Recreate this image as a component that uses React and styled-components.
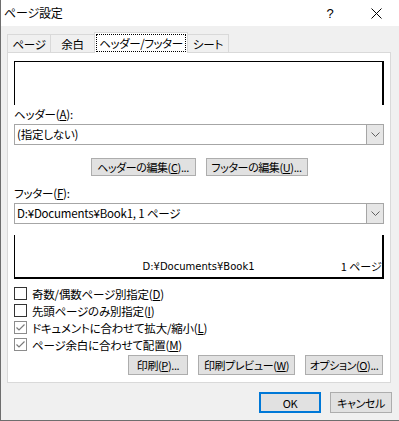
import React from "react";
import styled, { createGlobalStyle } from "styled-components";

const Global = createGlobalStyle`
  * { box-sizing: border-box; }
  html, body { margin: 0; padding: 0; background: #fff; }
  body {
    font-family: "Noto Sans CJK JP", "Noto Sans", sans-serif;
    font-size: 11.5px;
    letter-spacing: -0.2px;
    color: #000;
    font-feature-settings: "palt";
  }
`;

const Window = styled.div`
  width: 399px;
  height: 421px;
  background: #f0f0f0;
  border-left: 1px solid #6e6e6e;
  border-bottom: 1px solid #6e6e6e;
  display: flex;
  flex-direction: column;
`;

const TitleBar = styled.div`
  height: 26px;
  background: #fff;
  display: flex;
  align-items: center;
`;

const TitleText = styled.div`
  flex: 1;
  padding-left: 3px;
  font-size: 12px;
  line-height: 26px;
`;

const CaptionButton = styled.div`
  width: 46px;
  height: 26px;
  display: flex;
  align-items: center;
  justify-content: center;
  font-family: "Liberation Sans", sans-serif;
  font-size: 13px;
`;

const TabStrip = styled.div`
  height: 26px;
  display: flex;
  align-items: flex-end;
  padding-left: 6px;
`;

const Tab = styled.div`
  position: relative;
  z-index: ${(p) => (p.$active ? 1 : 0)};
  width: ${(p) => p.$w}px;
  height: ${(p) => (p.$active ? 21 : 18)}px;
  margin-left: ${(p) => (p.$first ? 0 : -1)}px;
  margin-bottom: ${(p) => (p.$active ? -1 : 0)}px;
  border: 1px solid #d9d9d9;
  border-bottom: none;
  background: ${(p) => (p.$active ? "#fff" : "#f0f0f0")};
  display: flex;
  align-items: center;
  justify-content: center;
  line-height: 16px;
  white-space: nowrap;
  padding-top: ${(p) => (p.$active ? 0 : 1)}px;
`;

const FocusText = styled.span`
  border: 1px dotted #000;
  padding: 0 2px;
  line-height: 16px;
  letter-spacing: -0.4px;
`;

const Panel = styled.div`
  margin-left: 6px;
  width: 384px;
  height: 331px;
  background: #fff;
  border: 1px solid #d9d9d9;
  padding: 8px 6px 0 6px;
  display: flex;
  flex-direction: column;
`;

const HeaderPreview = styled.div`
  height: 44px;
  border-top: 1px solid #000;
  border-left: 1px solid #000;
  border-right: 2px solid #000;
`;

const FooterPreview = styled.div`
  margin-top: 11px;
  height: 44px;
  border-left: 1px solid #000;
  border-bottom: 2px solid #000;
  border-right: 2px solid #000;
  display: grid;
  grid-template-columns: 1fr auto 1fr;
  align-items: end;
  padding-bottom: 4px;
  font-family: "DejaVu Sans", "Noto Sans CJK JP", sans-serif;
  font-size: 10px;
  letter-spacing: 0;
  line-height: 13px;
  font-feature-settings: normal;
`;

const PreviewCenter = styled.span`
  grid-column: 2;
`;

const PreviewRight = styled.span`
  grid-column: 3;
  justify-self: end;
  font-family: "Noto Sans CJK JP", sans-serif;
  font-size: 11px;
`;

const FieldLabel = styled.div`
  height: 19px;
  line-height: 19px;
  margin-top: ${(p) => p.$mt || 0}px;
`;

const Combo = styled.div`
  height: 21px;
  border: 1px solid #a6a6a6;
  display: flex;
  background: #fff;
`;

const ComboText = styled.div`
  flex: 1;
  padding-left: 2px;
  line-height: 19px;
  white-space: nowrap;
`;

const ComboArrow = styled.div`
  width: 17px;
  background: #e6e6e6;
  border-left: 1px solid #a6a6a6;
  display: flex;
  align-items: center;
  justify-content: center;
`;

const ButtonRow = styled.div`
  display: flex;
  justify-content: ${(p) => p.$justify || "center"};
  gap: ${(p) => p.$gap || 10}px;
  margin-top: ${(p) => p.$mt || 0}px;
  padding-right: ${(p) => p.$pr || 0}px;
`;

const Button = styled.button`
  width: ${(p) => p.$w}px;
  height: ${(p) => p.$h}px;
  padding: 0;
  margin: 0;
  background: #e1e1e1;
  border: ${(p) => (p.$default ? "2px solid #0078d7" : "1px solid #adadad")};
  font-family: inherit;
  font-size: 11px;
  letter-spacing: -0.4px;
  font-feature-settings: "palt";
  color: #000;
  line-height: 14px;
  white-space: nowrap;
  overflow: hidden;
`;

const CheckList = styled.div`
  margin-top: 6px;
  display: flex;
  flex-direction: column;
`;

const CheckRow = styled.div`
  height: 17px;
  display: flex;
  align-items: center;
  gap: 5px;
`;

const Box = styled.div`
  width: 13px;
  height: 13px;
  border: 1px solid ${(p) => (p.$checked ? "#8c8c8c" : "#333")};
  background: #fff;
  display: flex;
  align-items: center;
  justify-content: center;
`;

const Footer = styled.div`
  display: flex;
  justify-content: flex-end;
  gap: 9px;
  padding: 9px 7px 0 0;
`;

const Chevron = () => (
  <svg width="9" height="5" viewBox="0 0 9 5">
    <polyline points="0.5,0.5 4.5,4.5 8.5,0.5" fill="none" stroke="#606060" strokeWidth="1" />
  </svg>
);

const CloseIcon = () => (
  <svg width="11" height="11" viewBox="0 0 11 11">
    <line x1="0.5" y1="0.5" x2="10.5" y2="10.5" stroke="#000" strokeWidth="1" />
    <line x1="10.5" y1="0.5" x2="0.5" y2="10.5" stroke="#000" strokeWidth="1" />
  </svg>
);

const Check = () => (
  <svg width="11" height="11" viewBox="0 0 11 11">
    <polyline points="1.5,5.5 4,8 9.5,2.5" fill="none" stroke="#7a7a7a" strokeWidth="1.2" />
  </svg>
);

const CheckItem = ({ checked, children }) => (
  <CheckRow>
    <Box $checked={checked}>{checked && <Check />}</Box>
    <span>{children}</span>
  </CheckRow>
);

export default function App() {
  return (
    <>
      <Global />
      <Window>
        <TitleBar>
          <TitleText>ページ設定</TitleText>
          <CaptionButton>?</CaptionButton>
          <CaptionButton>
            <CloseIcon />
          </CaptionButton>
        </TitleBar>
        <TabStrip>
          <Tab $first $w={44}>ページ</Tab>
          <Tab $w={45}>余白</Tab>
          <Tab $active $w={94}>
            <FocusText>ヘッダー/フッター</FocusText>
          </Tab>
          <Tab $w={42}>シート</Tab>
        </TabStrip>
        <Panel>
          <HeaderPreview />
          <FieldLabel>
            ヘッダー(<u>A</u>):
          </FieldLabel>
          <Combo>
            <ComboText>(指定しない)</ComboText>
            <ComboArrow>
              <Chevron />
            </ComboArrow>
          </Combo>
          <ButtonRow $mt={13}>
            <Button $w={105} $h={18}>
              ヘッダーの編集(<u>C</u>)...
            </Button>
            <Button $w={102} $h={18}>
              フッターの編集(<u>U</u>)...
            </Button>
          </ButtonRow>
          <FieldLabel $mt={8}>
            フッター(<u>F</u>):
          </FieldLabel>
          <Combo>
            <ComboText>D:¥Documents¥Book1, 1 ページ</ComboText>
            <ComboArrow>
              <Chevron />
            </ComboArrow>
          </Combo>
          <FooterPreview>
            <PreviewCenter>D:¥Documents¥Book1</PreviewCenter>
            <PreviewRight>1 ページ</PreviewRight>
          </FooterPreview>
          <CheckList>
            <CheckItem>
              奇数/偶数ページ別指定(<u>D</u>)
            </CheckItem>
            <CheckItem>
              先頭ページのみ別指定(<u>I</u>)
            </CheckItem>
            <CheckItem checked>
              ドキュメントに合わせて拡大/縮小(<u>L</u>)
            </CheckItem>
            <CheckItem checked>
              ページ余白に合わせて配置(<u>M</u>)
            </CheckItem>
          </CheckList>
          <ButtonRow $justify="flex-end" $gap={10} $mt={2} $pr={1}>
            <Button $w={60} $h={20}>
              印刷(<u>P</u>)...
            </Button>
            <Button $w={97} $h={20}>
              印刷プレビュー(<u>W</u>)
            </Button>
            <Button $w={78} $h={20}>
              オプション(<u>O</u>)...
            </Button>
          </ButtonRow>
        </Panel>
        <Footer>
          <Button $default $w={62} $h={21}>
            OK
          </Button>
          <Button $w={62} $h={21}>
            キャンセル
          </Button>
        </Footer>
      </Window>
    </>
  );
}
